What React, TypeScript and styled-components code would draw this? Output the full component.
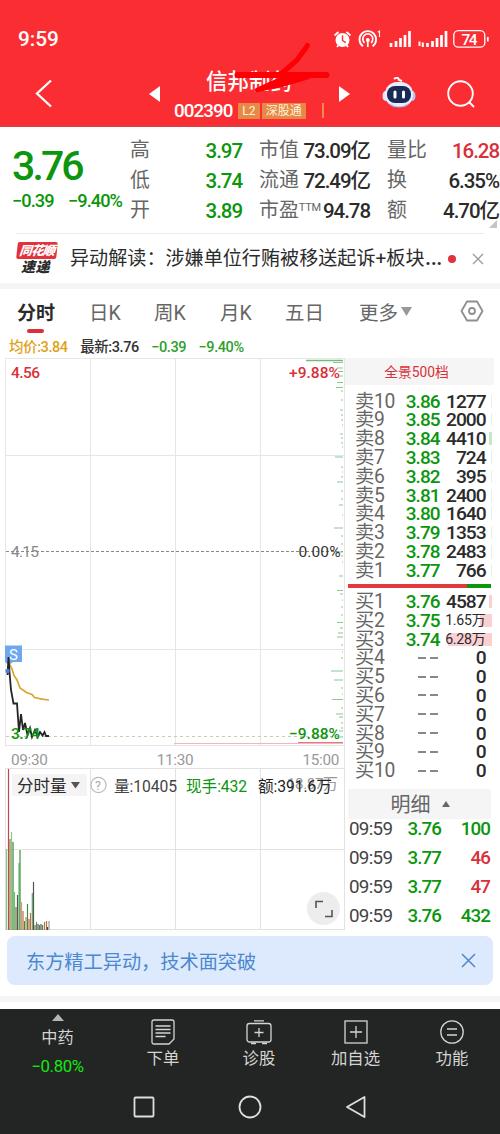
import React from 'react';
import styled, { createGlobalStyle } from 'styled-components';

const GREEN = '#0b960d';
const RED = '#d9303a';
const FONT = `Roboto, "Noto Sans CJK SC", sans-serif`;

const Global = createGlobalStyle`
  * { box-sizing: border-box; }
  body { margin: 0; background: #fff; font-family: ${FONT}; color: #2b2b2b; }
  svg { display: block; flex: none; }
`;

const Page = styled.div`
  width: 500px;
  height: 1134px;
  display: flex;
  flex-direction: column;
  overflow: hidden;
  background: #fff;
  white-space: nowrap;
`;

/* ---------- header ---------- */
const Header = styled.header`
  height: 127px;
  background: #fa2d33;
  border-bottom: 2px solid #e23a43;
  color: #fff;
  flex: none;
`;
const StatusBar = styled.div`
  height: 61px;
  padding: 16px 9px 0 18px;
  display: flex;
  align-items: center;
  justify-content: space-between;
`;
const Clock = styled.span`
  font-size: 20.8px;
  font-weight: 500;
`;
const NavBar = styled.div`
  position: relative;
  height: 64px;
  display: grid;
  grid-template-columns: 149px 21px 154px 36px 140px;
  align-items: center;
`;
const NavCell = styled.div<{ $pl?: number; $gap?: number }>`
  display: flex;
  align-items: center;
  padding-left: ${p => p.$pl ?? 0}px;
  gap: ${p => p.$gap ?? 0}px;
`;
const TitleBlock = styled.div`
  display: flex;
  flex-direction: column;
  padding: 8px 0 0 4px;
`;
const StockName = styled.div`
  padding-left: 32px;
  font-size: 21.5px;
  line-height: 25px;
  font-weight: 500;
`;
const CodeLine = styled.div`
  display: flex;
  align-items: center;
  height: 33px;
`;
const Code = styled.span`
  width: 65px;
  font-size: 18.8px;
  font-weight: 500;
  letter-spacing: -0.9px;
`;
const Tag = styled.span<{ $w: number }>`
  width: ${p => p.$w}px;
  height: 16px;
  line-height: 16px;
  margin-right: 2px;
  font-size: 12px;
  text-align: center;
  background: #e68945;
  color: #fff3dd;
`;
const TagBar = styled.span`
  width: 2px;
  height: 15px;
  margin-left: 14px;
  background: #f08a4a;
`;
const Scribble = styled.svg`
  position: absolute;
  left: 230px;
  top: -22px;
`;

/* ---------- quote ---------- */
const Quote = styled.section`
  height: 106px;
  padding: 9px 0 0 12px;
  display: grid;
  grid-template-columns: 118px 112px 111px 112px;
  flex: none;
  position: relative;
`;
const PriceBox = styled.div`
  color: ${GREEN};
`;
const Price = styled.div`
  font-size: 41px;
  line-height: 60px;
  font-weight: 500;
  letter-spacing: -2.9px;
`;
const Change = styled.div`
  display: flex;
  justify-content: space-between;
  width: 110px;
  margin-top: -5px;
  font-size: 18.2px;
  line-height: 20px;
  font-weight: 500;
  letter-spacing: -0.95px;
`;
const StatColumn = styled.div<{ $ml?: number }>`
  display: flex;
  flex-direction: column;
  margin-left: ${p => p.$ml ?? 0}px;
  margin-right: ${p => -(p.$ml ?? 0)}px;
`;
const Stat = styled.div<{ $color?: string }>`
  height: 30px;
  line-height: 30px;
  display: flex;
  justify-content: space-between;
  font-size: 20.5px;
  b {
    font-weight: 500;
    letter-spacing: -1.05px;
    color: ${p => p.$color ?? '#2b2b2b'};
  }
`;
const StatLabel = styled.span`
  color: #666;
  font-size: 19.9px;
  display: flex;
  small { font-size: 11px; line-height: 23px; letter-spacing: -0.3px; }
`;
const Corner = styled.i`
  position: absolute;
  right: 3px;
  top: 93px;
  border-left: 8px solid transparent;
  border-bottom: 8px solid #c4c4c4;
`;

/* ---------- news ---------- */
const News = styled.section`
  height: 50px;
  margin: 0 16px;
  border-top: 1px solid #ebebeb;
  display: flex;
  align-items: center;
  flex: none;
`;
const NewsLogo = styled.div`
  width: 54px;
  padding-left: 1px;
  font-style: italic;
  font-weight: 900;
`;
const LogoTop = styled.div`
  width: 40px;
  height: 17px;
  line-height: 17px;
  border-radius: 2px;
  background: #e0333c;
  color: #fff;
  font-size: 12.5px;
  letter-spacing: -0.8px;
  text-align: center;
  transform: skewX(-6deg);
`;
const LogoBottom = styled.div`
  padding-left: 4px;
  font-size: 14px;
  line-height: 17px;
  letter-spacing: 0.6px;
`;
const NewsText = styled.span`
  width: 378px;
  padding-top: 1px;
  font-size: 19.1px;
  line-height: 26px;
`;
const Ellipsis = styled.span`
  font-size: 27px;
  line-height: 20px;
`;
const NewsDot = styled.i`
  width: 8px;
  height: 8px;
  margin-right: 16px;
  border-radius: 50%;
  background: #e0333c;
`;
const Band = styled.div`
  height: 6px;
  background: #f5f5f5;
  flex: none;
`;

/* ---------- tabs ---------- */
const Tabs = styled.nav`
  height: 47px;
  display: grid;
  grid-template-columns: 72px 65px 66px 65px 74px 101px 40px;
  padding-left: 17px;
  flex: none;
`;
const Tab = styled.div<{ $active?: boolean }>`
  position: relative;
  display: flex;
  align-items: center;
  height: 44px;
  gap: 3px;
  font-size: ${p => (p.$active ? 19 : 19.5)}px;
  font-weight: ${p => (p.$active ? 700 : 400)};
  color: ${p => (p.$active ? '#2b2b2b' : '#666')};
  &::after {
    content: '';
    display: ${p => (p.$active ? 'block' : 'none')};
    position: absolute;
    left: 10px;
    top: 40px;
    width: 17px;
    height: 4px;
    border-radius: 2px;
    background: ${RED};
  }
`;
const Summary = styled.div`
  height: 22px;
  padding: 2px 0 0 9px;
  line-height: 20px;
  display: flex;
  align-items: baseline;
  gap: 12.5px;
  font-size: 14.5px;
  font-weight: 500;
  letter-spacing: -0.42px;
  flex: none;
`;
const Tint = styled.span<{ $c: string }>`
  color: ${p => p.$c};
`;

/* ---------- main area ---------- */
const Main = styled.main`
  display: grid;
  grid-template-columns: 345px 155px;
  height: 572px;
  flex: none;
`;
const Axis = styled.div`
  height: 22px;
  display: flex;
  justify-content: space-between;
  align-items: center;
  padding: 5px 5px 0 11px;
  font-size: 15.3px;
  letter-spacing: -0.3px;
  color: #999;
  border-right: 1px solid #e6e6e6;
`;
const VolumePane = styled.div`
  position: relative;
  height: 162px;
  padding-top: 6px;
`;
const VolumeArt = styled.svg`
  position: absolute;
  left: 0;
  top: 0;
`;
const VolumeBar = styled.div`
  position: relative;
  height: 22px;
  display: flex;
  align-items: center;
  padding-left: 12px;
  font-size: 15.7px;
  letter-spacing: -0.1px;
`;
const VolumeSelect = styled.div`
  width: 75px;
  height: 22px;
  padding-left: 5px;
  display: flex;
  align-items: center;
  gap: 4px;
  background: #f5f3f4;
  font-size: 16.5px;
  letter-spacing: 0;
`;
const VolumeItem = styled.span<{ $w: number; $c: string }>`
  width: ${p => p.$w}px;
  color: ${p => p.$c};
`;
const Expand = styled.div`
  position: absolute;
  left: 307px;
  top: 124px;
  width: 33px;
  height: 33px;
  border-radius: 50%;
  background: #ededed;
  display: flex;
  align-items: center;
  justify-content: center;
`;

/* ---------- order book ---------- */
const Book = styled.aside`
  padding-right: 6px;
  display: flex;
  flex-direction: column;
`;
const BookHead = styled.div`
  height: 27px;
  line-height: 28px;
  padding-right: 6px;
  background: #f5f5f5;
  color: ${RED};
  font-size: 13.8px;
  text-align: center;
  margin-bottom: 6.6px;
  flex: none;
`;
const Level = styled.div`
  height: 18.8px;
  line-height: 19px;
  display: grid;
  grid-template-columns: 42px 42.5px 46px 3px 3px;
  padding-left: 10px;
  flex: none;
`;
const LevelName = styled.span`
  font-size: 19.3px;
  letter-spacing: -0.3px;
  color: #666;
`;
const LevelPrice = styled.span`
  font-size: 19px;
  font-weight: 500;
  letter-spacing: -1px;
  text-align: right;
  color: ${GREEN};
`;
const NoPrice = styled.span`
  display: flex;
  align-items: center;
  justify-content: flex-end;
  gap: 4px;
  padding-right: 2px;
  i { width: 8px; height: 2px; background: #888; }
`;
const LevelVolume = styled.span<{ $small?: boolean; $fill?: number }>`
  display: flex;
  justify-content: flex-end;
  font-size: ${p => (p.$small ? 14.2 : 19.2)}px;
  font-weight: ${p => (p.$small ? 400 : 500)};
  letter-spacing: ${p => (p.$small ? -0.3 : -1.05)}px;
  color: #2b2b2b;
  background: linear-gradient(#fbd0d3, #fbd0d3) right 3px / ${p => p.$fill ?? 0}px 13px no-repeat;
`;
const DepthMark = styled.i<{ $c: string; $w: number }>`
  grid-column: 5;
  justify-self: end;
  width: ${p => p.$w}px;
  height: 13px;
  margin-top: 3px;
  background: ${p => p.$c};
`;
const Ratio = styled.div`
  display: grid;
  grid-template-columns: 119px 24px;
  height: 4px;
  margin: 4.4px 0 4px 3px;
  flex: none;
  i { background: #e03a3c; }
  i + i { background: ${GREEN}; }
`;
const DetailHead = styled.div`
  width: 143px;
  height: 30px;
  margin: 9px 0 0 3px;
  padding: 0 0 0 1px;
  display: flex;
  align-items: center;
  justify-content: center;
  gap: 11px;
  background: #f5f5f5;
  color: #666;
  font-size: 20px;
  flex: none;
`;
const Trade = styled.div`
  height: 29.2px;
  line-height: 29px;
  display: grid;
  grid-template-columns: 51px 41px 49px;
  padding-left: 4px;
  font-size: 18.8px;
  letter-spacing: -0.95px;
  text-align: right;
  position: relative;
  top: -4px;
  flex: none;
`;
const TradeTime = styled.span`
  text-align: left;
  color: #444;
  letter-spacing: -0.7px;
`;
const TradeValue = styled.span<{ $c: string }>`
  color: ${p => p.$c};
  font-weight: 500;
`;

/* ---------- footer ---------- */
const Toast = styled.div`
  height: 49px;
  margin: 6px 7px 11px;
  padding: 0 17px 0 19px;
  border-radius: 8px;
  background: #dde9fc;
  color: #4a88cf;
  font-size: 19.2px;
  display: flex;
  align-items: center;
  justify-content: space-between;
  flex: none;
`;
const Bottom = styled.footer`
  margin-top: 7px;
  height: 125px;
  background: #222523;
  color: #d4d4d4;
  flex: none;
`;
const Menu = styled.div`
  display: grid;
  grid-template-columns: 115px 96px 96px 97px 96px;
  height: 75px;
`;
const MenuItem = styled.div`
  display: flex;
  flex-direction: column;
  align-items: center;
  padding-top: 10px;
  font-size: 16.4px;
  line-height: 27px;
`;
const Sector = styled(MenuItem)`
  padding-top: 5px;
  gap: 4px;
  line-height: 26px;
  font-size: 16.2px;
`;
const SectorChange = styled.span`
  color: #12e912;
  font-size: 16.8px;
  letter-spacing: -0.4px;
  line-height: 22px;
`;
const SystemNav = styled.div`
  display: grid;
  grid-template-columns: 106px 106px 106px;
  justify-content: center;
  justify-items: center;
  align-items: center;
  height: 45px;
`;

const StatusIcons = () => (
  <svg width="160" height="24" viewBox="322 26 160 24" fill="none" stroke="#fff">
    <circle cx="333.5" cy="39" r="7" fill="#fff" stroke="none" />
    <path d="M325.500 34.500l4-3.500M341.500 34.500l-4-3.500M328 46l1.500-2M339 46l-1.500-2" strokeWidth="1.800" />
    <path d="M333.500 34.500V39.500l3.200 2.200" stroke="#fa2d33" strokeWidth="1.400" />
    <path d="M354 45.200a8.300 8.300 0 1 1 9.600 0" strokeWidth="1.900" />
    <path d="M355.600 41.800a5 5 0 1 1 6.400 0" strokeWidth="1.700" />
    <circle cx="358.800" cy="39" r="2" fill="#fff" stroke="none" />
    <path d="M358.800 40v6" strokeWidth="1.800" />
    <path d="M368.800 31.200l1.700-1.200v6" strokeWidth="1.100" />
    <path d="M382 46v-4M387 46v-6M391.500 46v-9M396 46v-12M400.500 46v-16M418.500 46v-4M423.500 46v-6M428 46v-9M432.500 46v-12M437 46v-16" strokeWidth="2.700" />
    <path d="M410.500 45v-4.500M413.800 46v-4.500" strokeWidth="2" />
    <rect x="444.800" y="29.600" width="31" height="16.600" rx="4.500" strokeWidth="1.300" />
    <path d="M478.800 36v4.500" strokeWidth="1.800" />
    <text x="452.500" y="43.700" fill="#fff" stroke="none" fontFamily="Roboto" fontWeight="500" fontSize="15.500" textLength="16">74</text>
  </svg>
);

const Robot = () => (
  <svg width="34" height="34" viewBox="0 1 34 34">
    <path d="M12 3q4-3 5 1l3 1" fill="none" stroke="#fff" strokeWidth="2" />
    <ellipse cx="3.500" cy="20" rx="3" ry="5" fill="#dfe6fb" />
    <ellipse cx="30.500" cy="20" rx="3" ry="5" fill="#b9c3ee" />
    <rect x="3" y="6" width="28" height="25" rx="12" fill="#e9edff" />
    <path d="M7 27q10 7 20 0l-3 3q-7 3-14 0z" fill="#a9b2e6" />
    <rect x="5" y="10" width="24" height="17" rx="8" fill="#182b57" />
    <path d="M13 16v5M21.500 16v5" stroke="#fff" strokeWidth="3" strokeLinecap="round" />
  </svg>
);

const ticks: [number, number][] = [
  [362.500, 10], [368, 6], [371.500, 5], [376, 5], [382.500, 6], [387.500, 7], [391, 2], [400, 2], [410, 3], [415, 2], [420, 2],
  [425, 1], [434, 3], [438, 2], [443, 2], [447, 1], [457, 8], [467, 2], [472, 1], [477, 2], [482, 6], [491, 2], [499, 2],
  [505, 4], [515, 1], [528, 9], [536, 2], [544, 2], [552, 5], [556, 2], [562, 1], [576, 4], [590.500, 6], [594, 3], [600, 1],
  [607, 2], [615, 2], [622.500, 6], [628, 3], [633, 5], [637, 6], [645, 2], [652, 1], [658, 2], [671, 12], [680, 9],
  [688, 2], [694, 1], [699.500, 11], [708, 2], [714, 7], [717, 4], [723, 2], [728, 2], [731, 4], [737, 3],
];

const PriceChart = () => (
  <svg width="345" height="388" viewBox="0 358 345 388" fontFamily="Roboto" fontWeight="500" fontSize="15.500">
    <path d="M5.500 746V358.500H345M344.500 358V746M90.500 358V746M175.500 358V746M260.500 358V746M5 455.500H345M5 649.500H345M5 745.500H345" fill="none" stroke="#e6e6e6" />
    <path d="M6 551.500H343" stroke="#888" strokeDasharray="3 2" />
    <path d="M6 736.500H343" stroke="#c9cdb0" strokeDasharray="3 3" />
    <path d="M306 360.500H343" stroke="#74bd78" strokeWidth="1.500" />
    {ticks.map(([y, w]) => <path key={y} d={`M${343 - w} ${y}h${w}`} stroke="#8bc98f" />)}
    <path d="M174 743.500H343" stroke="#f3b6bb" />
    <path d="M298 742.500H343" stroke="#e8747d" />
    <text x="11" y="556.500" fill="#888" fontWeight="400" textLength="28">4.15</text>
    <text x="298.500" y="556.500" fill="#333" fontWeight="400" textLength="42">0.00%</text>
    <text x="11" y="378" fill={RED} textLength="29">4.56</text>
    <text x="289" y="378" fill={RED} textLength="51">+9.88%</text>
    <text x="289" y="738.500" fill={GREEN} textLength="51">−9.88%</text>
    <path d="M5 645.500h17v16.500h-9l-4 3-4-3z" fill="#6ea6f0" />
    <text x="9" y="659.500" fill="#fff" fontWeight="400" fontSize="15">S</text>
    <path d="M8.500 662L12 669L14 675.500L17 680L20 688L26.500 692.500L32 694.500L34.500 697.500L42 699.200L49 700" fill="none" stroke="#d9a62a" strokeWidth="1.700" />
    <path d="M7.500 675L8.500 657L9.500 672L11 690L13.500 703.500H17L19 732L21 714L23 730L25 723L27.500 735L30 728L32 737L35 730L37.500 737L40 732L42.500 735.500L44.500 732L46 736H49" fill="none" stroke="#252525" strokeWidth="1.800" />
    <text x="11" y="738.500" fill={GREEN} textLength="29">3.74</text>
    <circle cx="7.500" cy="671" r="2.200" fill="#4d80df" />
  </svg>
);

const bars: [number, number, string][] = [
  [6.500, 849, '#83c985'], [8.500, 769, '#b94b50'], [10, 839, '#a56b43'], [11.500, 832, '#7cd080'], [13, 842, '#338a39'], [14.500, 892, '#6bc36f'],
  [16, 907, '#8a6b48'], [17.500, 895, '#555'], [19, 863, '#60b866'], [20, 850, '#3e8d42'], [21.500, 902, '#dc9474'],
  [23, 911, '#b77147'], [24.500, 921, '#3e8d42'], [26, 917, '#d0845d'], [27.500, 904, '#3e8d42'], [29, 919, '#b77147'],
  [30.500, 913, '#b77147'], [32.300, 893, '#5cac61'], [33.500, 882, '#555'], [35, 925, '#a45555'],
  [36.500, 922, '#668a60'], [38, 924, '#555'], [39.500, 925, '#44934a'], [41, 924, '#555'], [42.500, 925, '#44934a'], [44.500, 922, '#b77147'], [46.500, 921, '#b77147'], [47.500, 927, '#444'], [49, 921, '#999'],
];

const asks: [string, string, string][] = [
  ['10', '3.86', '1277'], ['9', '3.85', '2000'], ['8', '3.84', '4410'], ['7', '3.83', '724'], ['6', '3.82', '395'],
  ['5', '3.81', '2400'], ['4', '3.80', '1640'], ['3', '3.79', '1353'], ['2', '3.78', '2483'], ['1', '3.77', '766'],
];
const trades: [string, string, string][] = [
  ['3.76', '100', GREEN], ['3.77', '46', RED], ['3.77', '47', RED], ['3.76', '432', GREEN],
];

export default function App() {
  return (
    <Page>
      <Global />
      <Header>
        <StatusBar><Clock>9:59</Clock><StatusIcons /></StatusBar>
        <NavBar>
          <NavCell $pl={34}>
            <svg width="20" height="30" viewBox="0 1 20 30"><path d="M17 2.500L3 15.500L17 28.500" fill="none" stroke="#fff" strokeWidth="2.300" /></svg>
          </NavCell>
          <svg width="11" height="16" viewBox="0 0 11 16"><path d="M11 0v16L0 8z" fill="#fff" /></svg>
          <TitleBlock>
            <StockName>信邦制药</StockName>
            <CodeLine><Code>002390</Code><Tag $w={22}>L2</Tag><Tag $w={45}>深股通</Tag><TagBar /></CodeLine>
          </TitleBlock>
          <NavCell $pl={15}>
            <svg width="11" height="16" viewBox="0 0 11 16"><path d="M0 0v16L11 8z" fill="#fff" /></svg>
          </NavCell>
          <NavCell $pl={22} $gap={30}>
            <Robot />
            <svg width="30" height="30" viewBox="0 0 30 30" fill="none" stroke="#fff" strokeWidth="1.900"><circle cx="14.500" cy="14.500" r="12.300" /><path d="M23 23l5 5" /></svg>
          </NavCell>
          <Scribble width="104" height="60" viewBox="230 39 104 60" fill="none" stroke="#fc0006" strokeLinecap="round" strokeLinejoin="round">
            <path d="M307.500 45.500L297 60L281 74" strokeWidth="5" />
            <path d="M237.500 75H326.500" strokeWidth="6" />
            <path d="M308 77L284 84L257 90L272 83L285 78z" strokeWidth="4.500" fill="#fc0006" />
          </Scribble>
        </NavBar>
      </Header>

      <Quote>
        <PriceBox>
          <Price>3.76</Price>
          <Change><span>−0.39</span><span>−9.40%</span></Change>
        </PriceBox>
        <StatColumn>
          <Stat $color={GREEN}><StatLabel>高</StatLabel><b>3.97</b></Stat>
          <Stat $color={GREEN}><StatLabel>低</StatLabel><b>3.74</b></Stat>
          <Stat $color={GREEN}><StatLabel>开</StatLabel><b>3.89</b></Stat>
        </StatColumn>
        <StatColumn $ml={17}>
          <Stat><StatLabel>市值</StatLabel><b>73.09亿</b></Stat>
          <Stat><StatLabel>流通</StatLabel><b>72.49亿</b></Stat>
          <Stat><StatLabel>市盈<small>TTM</small></StatLabel><b>94.78</b></Stat>
        </StatColumn>
        <StatColumn $ml={34}>
          <Stat $color={RED}><StatLabel>量比</StatLabel><b>16.28</b></Stat>
          <Stat><StatLabel>换</StatLabel><b>6.35%</b></Stat>
          <Stat><StatLabel>额</StatLabel><b>4.70亿</b></Stat>
        </StatColumn>
        <Corner />
      </Quote>

      <News>
        <NewsLogo><LogoTop>同花顺</LogoTop><LogoBottom>速递</LogoBottom></NewsLogo>
        <NewsText>异动解读：涉嫌单位行贿被移送起诉+板块<Ellipsis>…</Ellipsis></NewsText>
        <NewsDot />
        <svg width="12" height="12" viewBox="0 0 12 12"><path d="M1 1l10 10M11 1L1 11" stroke="#999" strokeWidth="1.300" /></svg>
      </News>
      <Band />

      <Tabs>
        <Tab $active>分时</Tab>
        <Tab>日K</Tab>
        <Tab>周K</Tab>
        <Tab>月K</Tab>
        <Tab>五日</Tab>
        <Tab>更多<svg width="11" height="9" viewBox="0 0 11 9"><path d="M0 0h11L5.500 9z" fill="#999" /></svg></Tab>
        <Tab>
          <svg width="24" height="22" viewBox="0 0 24 22" fill="none" stroke="#8e8e8e" strokeWidth="1.800"><path d="M7 1.500h10L22.500 11L17 20.500H7L1.500 11z" strokeLinejoin="round" /><circle cx="12" cy="11" r="3" /></svg>
        </Tab>
      </Tabs>
      <Summary>
        <Tint $c="#dfa119">均价:3.84</Tint>
        <Tint $c="#333">最新:3.76</Tint>
        <Tint $c="#2f9e2d">−0.39</Tint>
        <Tint $c="#2f9e2d">−9.40%</Tint>
      </Summary>

      <Main>
        <div>
          <PriceChart />
          <Axis><span>09:30</span><span>11:30</span><span>15:00</span></Axis>
          <VolumePane>
            <VolumeArt width="345" height="162" viewBox="0 768 345 162">
              <path d="M5.500 930V768.500H345M344.500 768V930M90.500 768V930M175.500 768V930M260.500 768V930M5 849.500H345M5 929.500H345" fill="none" stroke="#e2e2e2" />
              {bars.map(([x, y, c]) => <path key={x} d={`M${x} ${y}V930`} stroke={c} strokeWidth="1.200" />)}
              <text x="287" y="788.500" fill="#999" fontSize="15" textLength="51" fontFamily='Roboto, "Noto Sans CJK SC"'>18.87万</text>
            </VolumeArt>
            <VolumeBar>
              <VolumeSelect>分时量<svg width="9" height="7" viewBox="0 0 9 7"><path d="M0 0h9L4.500 6.500z" fill="#555" /></svg></VolumeSelect>
              <svg width="27" height="18" viewBox="0 0 27 18"><circle cx="11.500" cy="9" r="7.600" fill="none" stroke="#bbb" strokeWidth="1.200" /><text x="8" y="13.500" fontSize="12.500" fill="#aaa">?</text></svg>
              <VolumeItem $w={72} $c="#444">量:10405</VolumeItem>
              <VolumeItem $w={72} $c={GREEN}>现手:432</VolumeItem>
              <VolumeItem $w={80} $c="#222">额:391.6万</VolumeItem>
            </VolumeBar>
            <Expand>
              <svg width="18" height="18" viewBox="0 0 18 18" fill="none" stroke="#555" strokeWidth="1.600"><path d="M1 8V1.500h7M17 10v6.500h-7" /></svg>
            </Expand>
          </VolumePane>
        </div>

        <Book>
          <BookHead>全景500档</BookHead>
          {asks.map(([n, p, v]) => (
            <Level key={n}>
              <LevelName>卖{n}</LevelName><LevelPrice>{p}</LevelPrice><LevelVolume>{v}</LevelVolume>
              <DepthMark $c={n === '8' ? '#c5e8c7' : '#e7f0e7'} $w={n === '8' ? 3 : 1} />
            </Level>
          ))}
          <Ratio><i /><i /></Ratio>
          <Level><LevelName>买1</LevelName><LevelPrice>3.76</LevelPrice><LevelVolume>4587</LevelVolume><DepthMark $c="#fbd0d3" $w={3} /></Level>
          <Level><LevelName>买2</LevelName><LevelPrice>3.75</LevelPrice><LevelVolume $small $fill={6}>1.65万</LevelVolume><DepthMark $c="#fbd0d3" $w={6} /></Level>
          <Level><LevelName>买3</LevelName><LevelPrice>3.74</LevelPrice><LevelVolume $small $fill={38}>6.28万</LevelVolume><DepthMark $c="#fbd0d3" $w={6} /></Level>
          {[4, 5, 6, 7, 8, 9, 10].map(n => (
            <Level key={n}><LevelName>买{n}</LevelName><NoPrice><i /><i /></NoPrice><LevelVolume>0</LevelVolume></Level>
          ))}
          <DetailHead>明细<svg width="8" height="6" viewBox="0 0 8 6"><path d="M0 6h8L4 0z" fill="#666" /></svg></DetailHead>
          {trades.map(([p, v, c], i) => (
            <Trade key={i}><TradeTime>09:59</TradeTime><TradeValue $c={GREEN}>{p}</TradeValue><TradeValue $c={c}>{v}</TradeValue></Trade>
          ))}
        </Book>
      </Main>

      <Toast>
        东方精工异动，技术面突破
        <svg width="15" height="15" viewBox="0 0 15 15"><path d="M1 1l13 13M14 1L1 14" stroke="#4a88cf" strokeWidth="1.500" /></svg>
      </Toast>
      <Band />
      <Bottom>
        <Menu>
          <Sector>
            <svg width="12" height="7" viewBox="0 0 12 7"><path d="M0 7h12L6 0z" fill="#b5b5b5" /></svg>
            <span>中药</span>
            <SectorChange>−0.80%</SectorChange>
          </Sector>
          <MenuItem>
            <svg width="24" height="26" viewBox="0 0 24 26" fill="none" stroke="#d4d4d4" strokeWidth="1.300"><path d="M3 1h18q2 0 2 2v17l-5 5H3q-2 0-2-2V3q0-2 2-2zM4.500 7h15M4.500 10.500h15M4.500 14h15M4.500 17.500h10" /></svg>
            下单
          </MenuItem>
          <MenuItem>
            <svg width="26" height="26" viewBox="0 0 26 26" fill="none" stroke="#d4d4d4" strokeWidth="1.300"><rect x="1" y="4.500" width="24" height="18.500" rx="2.500" /><path d="M8 1.800h10M13 9v9M8.500 13.500h9M5 24.500h5M16 24.500h5" /></svg>
            诊股
          </MenuItem>
          <MenuItem>
            <svg width="24" height="26" viewBox="0 0 24 26" fill="none" stroke="#d4d4d4" strokeWidth="1.300"><rect x="1" y="2" width="22" height="22" /><path d="M12 7v12M6 13h12" /></svg>
            加自选
          </MenuItem>
          <MenuItem>
            <svg width="24" height="26" viewBox="0 0 24 26" fill="none" stroke="#d4d4d4" strokeWidth="1.300"><circle cx="12" cy="13" r="11.200" /><path d="M7 10h10M7 16h10" /></svg>
            功能
          </MenuItem>
        </Menu>
        <SystemNav>
          <svg width="22" height="22" viewBox="0 0 22 22"><rect x="1.500" y="1.500" width="19" height="19" rx="1" fill="none" stroke="#dedede" strokeWidth="1.800" /></svg>
          <svg width="24" height="24" viewBox="0 0 24 24"><circle cx="12" cy="12" r="10.500" fill="none" stroke="#dedede" strokeWidth="1.800" /></svg>
          <svg width="22" height="24" viewBox="0 0 22 24"><path d="M19.500 2v20L2 12z" fill="none" stroke="#dedede" strokeWidth="1.800" strokeLinejoin="round" /></svg>
        </SystemNav>
      </Bottom>
    </Page>
  );
}
